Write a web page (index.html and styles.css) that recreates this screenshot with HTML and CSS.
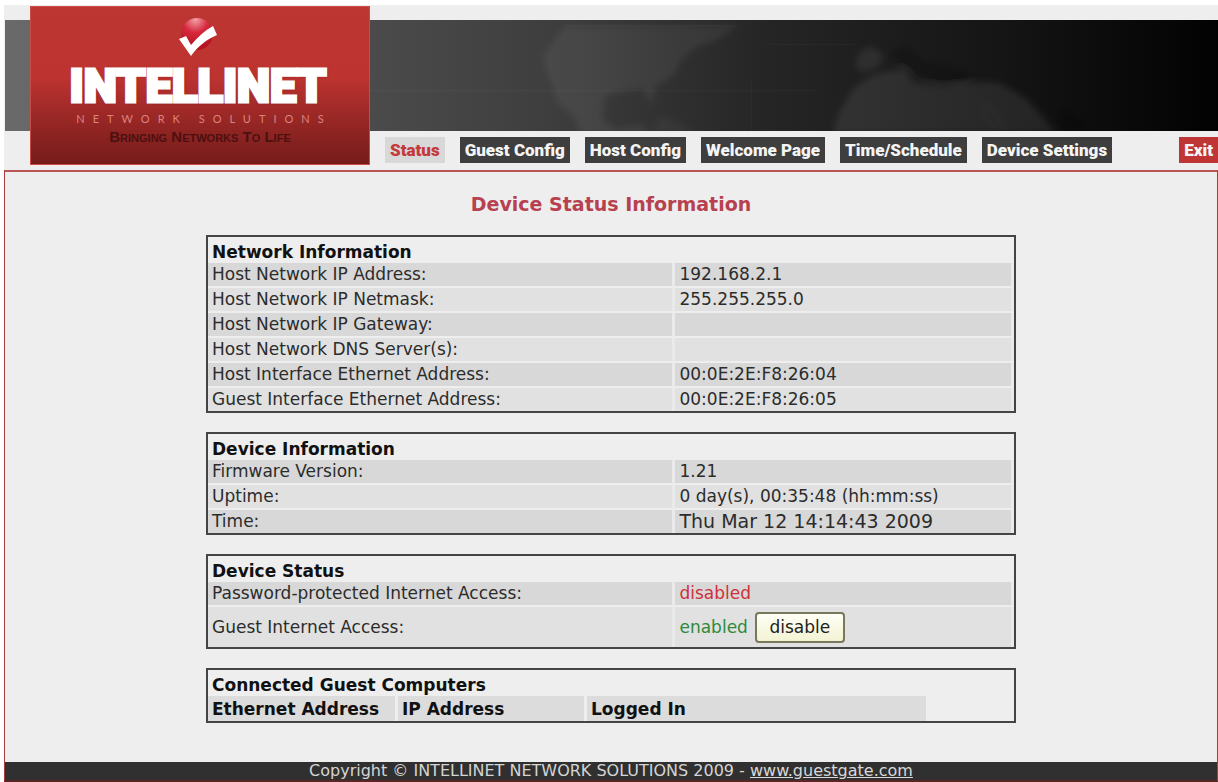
FILE: index.html
```html
<!DOCTYPE html>
<html lang="en">
<head>
<meta charset="utf-8">
<title>Intellinet - Device Status Information</title>
<link rel="stylesheet" href="styles.css">
</head>
<body>
<div class="page">
  <header class="header">
    <div class="banner">
      <svg class="map" viewBox="0 0 1213 110" preserveAspectRatio="xMidYMid slice" aria-hidden="true">
        <defs>
          <filter id="soft" x="-10%" y="-10%" width="120%" height="120%"><feGaussianBlur stdDeviation="3"/></filter>
        </defs>
        <g filter="url(#soft)">
          <path fill="#fff" fill-opacity=".06" d="M560 6H732L710 20L690 27L675 40L668 55L650 66L646 84L638 68L615 71L600 76L598 98L610 108L636 104L650 116H577L568 95L552 80L548 65L542 50L539 36L550 20Z"/>
          <path fill="#fff" fill-opacity=".04" d="M654 96L680 105L690 112H648Z"/>
          <path fill="#fff" fill-opacity=".08" d="M826 112L832 92L846 68L866 54L896 48L907 62L935 66L968 62L990 62L1018 78L1036 98L1046 112Z"/>
          <path fill="#fff" fill-opacity=".07" d="M848 46L852 32L864 26L876 34L872 46L856 52Z"/>
          <path fill="#000" fill-opacity=".2" d="M880 34L900 24L915 40L945 46L968 56L955 64L925 62L900 48ZM1048 84L1072 98L1082 112H1052ZM974 80L998 112H992L978 94Z"/>
        </g>
        <g fill="none" stroke="#fff" stroke-opacity=".04"><path d="M365 70H810M560 6H730M745 110V60M760 24H850"/></g>
      </svg>
    </div>
    <div class="logo">
      <svg class="logo-mark" viewBox="0 0 42 42" aria-hidden="true">
        <defs>
          <radialGradient id="ball" cx=".45" cy=".05" r=".9">
            <stop offset="0" stop-color="#f3a0a6"/><stop offset=".45" stop-color="#d5283d"/><stop offset="1" stop-color="#b3121f"/>
          </radialGradient>
        </defs>
        <circle cx="20" cy="18" r="16" fill="url(#ball)"/>
        <path fill="#fff" d="M2 23L9 20L14 29C20 22 27 15 36 10L40 19C30 23 20 31 14 40Z"/>
      </svg>
      <div class="logo-name">INTELLINET</div>
      <div class="logo-sub">NETWORK SOLUTIONS</div>
      <div class="logo-tag">Bringing Networks To Life</div>
    </div>
    <nav class="nav">
      <a class="tab active" href="#status">Status</a>
      <a class="tab" href="#guest">Guest Config</a>
      <a class="tab" href="#host">Host Config</a>
      <a class="tab" href="#welcome">Welcome Page</a>
      <a class="tab" href="#time">Time/Schedule</a>
      <a class="tab" href="#device">Device Settings</a>
      <a class="tab exit" href="#exit">Exit</a>
    </nav>
  </header>
  <div class="frame">
    <main class="content">
      <h1 class="title">Device Status Information</h1>
      <table class="panel">
        <colgroup><col class="label-col"><col></colgroup>
        <thead><tr><th colspan="2">Network Information</th></tr></thead>
        <tbody>
          <tr><td>Host Network IP Address:</td><td>192.168.2.1</td></tr>
          <tr><td>Host Network IP Netmask:</td><td>255.255.255.0</td></tr>
          <tr><td>Host Network IP Gateway:</td><td></td></tr>
          <tr><td>Host Network DNS Server(s):</td><td></td></tr>
          <tr><td>Host Interface Ethernet Address:</td><td>00:0E:2E:F8:26:04</td></tr>
          <tr><td>Guest Interface Ethernet Address:</td><td>00:0E:2E:F8:26:05</td></tr>
        </tbody>
      </table>
      <table class="panel">
        <colgroup><col class="label-col"><col></colgroup>
        <thead><tr><th colspan="2">Device Information</th></tr></thead>
        <tbody>
          <tr><td>Firmware Version:</td><td>1.21</td></tr>
          <tr><td>Uptime:</td><td>0 day(s), 00:35:48 (hh:mm:ss)</td></tr>
          <tr><td>Time:</td><td class="clock">Thu Mar 12 14:14:43 2009</td></tr>
        </tbody>
      </table>
      <table class="panel">
        <colgroup><col class="label-col"><col></colgroup>
        <thead><tr><th colspan="2">Device Status</th></tr></thead>
        <tbody>
          <tr><td>Password-protected Internet Access:</td><td class="off">disabled</td></tr>
          <tr class="tall"><td>Guest Internet Access:</td><td><div class="toggle"><span class="on">enabled</span><button class="button" type="button">disable</button></div></td></tr>
        </tbody>
      </table>
      <table class="panel guests">
        <thead>
          <tr><th colspan="4">Connected Guest Computers</th></tr>
          <tr class="columns"><th class="col-mac">Ethernet Address</th><th class="col-ip">IP Address</th><th class="col-login">Logged In</th><th class="col-rest"></th></tr>
        </thead>
      </table>
    </main>
    <footer class="footer">Copyright © INTELLINET NETWORK SOLUTIONS 2009 - <a href="#guestgate">www.guestgate.com</a></footer>
  </div>
</div>
</body>
</html>
```
FILE: styles.css
```css
* { box-sizing: border-box; }

body {
  margin: 0;
  padding: 5px 0 0 4px;
  background: #fff;
  color: #2c2c2c;
  font: 17px/23px "DejaVu Sans", Verdana, sans-serif;
}

.page {
  display: flex;
  flex-direction: column;
  min-height: calc(100vh - 5px);
  background: #eee;
}

.header { position: relative; padding-top: 15px; }

.banner {
  height: 111px;
  margin-left: 1px;
  background: linear-gradient(90deg, #6a6a6a 0, #4b4b4b 30%, #3e3e3e 45%, #262626 62%, #151515 82%, #020202 100%);
}

.map { display: block; width: 100%; height: 100%; }

.logo {
  position: absolute;
  top: 1px;
  left: 26px;
  display: flex;
  flex-direction: column;
  align-items: center;
  width: 340px;
  height: 159px;
  padding-top: 9px;
  background: linear-gradient(#bd3632 0, #bd3330 45%, #9a2826 70%, #741c1a 100%);
  border: 1px solid #cf4a46;
  white-space: nowrap;
}

.logo-mark { width: 42px; height: 42px; margin-right: 4px; }

.logo-name {
  margin-right: 4px;
  color: #fff;
  font: 900 47px/55px Roboto, sans-serif;
  -webkit-text-stroke: 3px #fff;
  text-shadow: 1px 1px 3px #7a1a18;
}

.logo-sub {
  margin-right: -8px;
  color: #dc8280;
  font: 11px/12px Lato, sans-serif;
  letter-spacing: 8px;
}

.logo-tag {
  margin-top: 4px;
  color: #4c1010;
  font: bold small-caps 15px/16px "Liberation Sans", sans-serif;
}

.nav {
  display: flex;
  gap: 15px;
  padding: 6px 0 7px 381px;
}

.tab {
  padding: 0 5px;
  background: #3e3e3e;
  color: #f4f4f4;
  font: 900 17px/26px Roboto, sans-serif;
  text-decoration: none;
  white-space: nowrap;
}

.tab.active { background: #d8d8d8; color: #c43a3a; }
.tab.exit { margin-left: auto; background: #bf3434; }

.frame {
  display: flex;
  flex: 1;
  flex-direction: column;
  border: 1px solid #a83a3a;
  border-top: 2px solid #b85656;
  border-bottom: 2px solid #5a2525;
}

.content { flex: 1; padding: 20px 16px; }

.title {
  margin: 0 0 19px;
  color: #b84150;
  font-size: 19px;
  line-height: 24px;
  text-align: center;
}

.panel {
  width: 100%;
  max-width: 810px;
  margin: 0 auto 19px;
  border: 2px solid #444;
  border-spacing: 0;
  table-layout: fixed;
}

.label-col { width: 58%; }

.panel th,
.panel td {
  height: 25px;
  padding: 0 4px;
  border-bottom: 2px solid #eee;
  text-align: left;
}

.panel th { height: 26px; padding-top: 3px; border-bottom: 0; color: #111; line-height: 22px; }
.panel .columns th { height: 25px; padding-top: 0; }
.panel tr:last-child td { height: 23px; border-bottom: 0; }
.panel tbody tr { background: #e1e1e1; }
.panel tbody tr:nth-child(odd) { background: #d8d8d8; }
.panel tbody td { border-right: 3px solid #eaeaea; }

.panel .clock { font-size: 19px; }
.panel .off { color: #cf3038; }
.on { color: #2f8a3c; }
.panel tr.tall:last-child td { height: 40px; }

.toggle { display: flex; gap: 7px; align-items: center; }

.button {
  width: 90px;
  height: 31px;
  padding: 0;
  border: 2px solid #77785c;
  border-radius: 4px;
  background: linear-gradient(#fffff6, #f3f3d4);
  color: #222;
  font: inherit;
}

.guests { table-layout: auto; }
.columns th { background: #dcdcdc; border-right: 3px solid #eee; }
.columns .col-rest { background: #eee; }
.col-mac { width: 190px; }
.col-ip { width: 189px; }
.col-login { width: 342px; }

.footer {
  background: #303030;
  color: #d4d4d4;
  font-size: 16px;
  line-height: 18px;
  text-align: center;
}

.footer a { color: #d8d8d8; }
```
